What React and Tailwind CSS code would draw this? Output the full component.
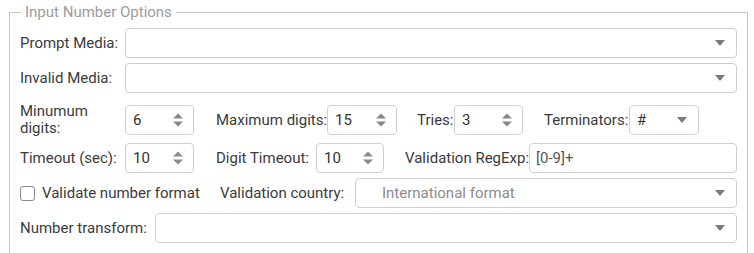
import React from "react";

function Caret() {
  return (
    <svg width="10" height="6" viewBox="0 0 10 6" className="shrink-0">
      <path d="M0 0 L10 0 L5 6 Z" fill="#7a7a7a" />
    </svg>
  );
}

function Spinner() {
  return (
    <svg width="10" height="14" viewBox="0 0 10 14" className="shrink-0">
      <path d="M0 5.5 L5 0.5 L10 5.5 Z" fill="#8a8a8a" />
      <path d="M0 8.5 L10 8.5 L5 13.5 Z" fill="#8a8a8a" />
    </svg>
  );
}

function Select({ value, className = "", textClass = "pl-[7px] text-[#333]" }) {
  return (
    <div
      className={`shrink-0 h-[30px] flex items-center justify-between border border-[#cfcfcf] rounded-[4px] bg-white pr-[11px] ${className}`}
    >
      <span className={textClass}>{value}</span>
      <Caret />
    </div>
  );
}

function NumberBox({ value, className = "" }) {
  return (
    <div
      className={`shrink-0 h-[30px] flex items-center justify-between border border-[#cfcfcf] rounded-[4px] bg-white pl-[7px] pr-[10px] ${className}`}
    >
      <span className="text-[#333]">{value}</span>
      <Spinner />
    </div>
  );
}

function Label({ children, className = "" }) {
  return <span className={`shrink-0 whitespace-nowrap ${className}`}>{children}</span>;
}

export default function App() {
  return (
    <div
      className="w-[754px] h-[253px] overflow-hidden bg-white text-[15px] text-[#3b3b3b]"
      style={{ fontFamily: "Roboto, 'Liberation Sans', sans-serif" }}
    >
      <fieldset className="ml-[9px] w-[739px] mt-[2px] border border-[#c6c6c6] pl-[10px] pr-[10px] pt-[6px] pb-[20px]">
        <legend className="ml-[1px] px-[4px] text-[#9c9c9c] leading-[20px]">
          Input Number Options
        </legend>

        <div className="flex items-center h-[30px]">
          <Label className="w-[105px]">Prompt Media:</Label>
          <Select value="" className="w-[612px]" />
        </div>

        <div className="flex items-center h-[30px] mt-[5px]">
          <Label className="w-[105px]">Invalid Media:</Label>
          <Select value="" className="w-[612px]" />
        </div>

        <div className="flex items-center h-[36px] mt-[9px]">
          <span className="shrink-0 w-[105px] leading-[17px]">
            Minumum
            <br />
            digits:
          </span>
          <NumberBox value="6" className="w-[69px]" />
          <Label className="ml-[22px] w-[111px]">Maximum digits:</Label>
          <NumberBox value="15" className="w-[70px]" />
          <Label className="ml-[20px] w-[37px]">Tries:</Label>
          <NumberBox value="3" className="w-[69px]" />
          <Label className="ml-[21px] w-[85px]">Terminators:</Label>
          <Select value="#" className="w-[70px]" />
        </div>

        <div className="flex items-center h-[30px] mt-[5px]">
          <Label className="w-[105px]">Timeout (sec):</Label>
          <NumberBox value="10" className="w-[69px]" />
          <Label className="ml-[22px] w-[100px]">Digit Timeout:</Label>
          <NumberBox value="10" className="w-[68px]" />
          <Label className="ml-[21px] w-[124px]">Validation RegExp:</Label>
          <div className="shrink-0 w-[208px] h-[30px] flex items-center border border-[#cfcfcf] rounded-[4px] pl-[6px] text-[#555]">
            [0-9]+
          </div>
        </div>

        <div className="flex items-center h-[30px] mt-[5px]">
          <span className="shrink-0 w-[15px] h-[15px] border border-[#8a8a8a] rounded-[3px] bg-white" />
          <Label className="ml-[7px] w-[178px]">Validate number format</Label>
          <Label className="w-[135px]">Validation country:</Label>
          <Select
            value="International format"
            className="w-[382px]"
            textClass="pl-[26px] text-[#8c8c8c]"
          />
        </div>

        <div className="flex items-center h-[30px] mt-[5px]">
          <Label className="w-[135px]">Number transform:</Label>
          <Select value="" className="w-[582px]" />
        </div>
      </fieldset>
    </div>
  );
}
